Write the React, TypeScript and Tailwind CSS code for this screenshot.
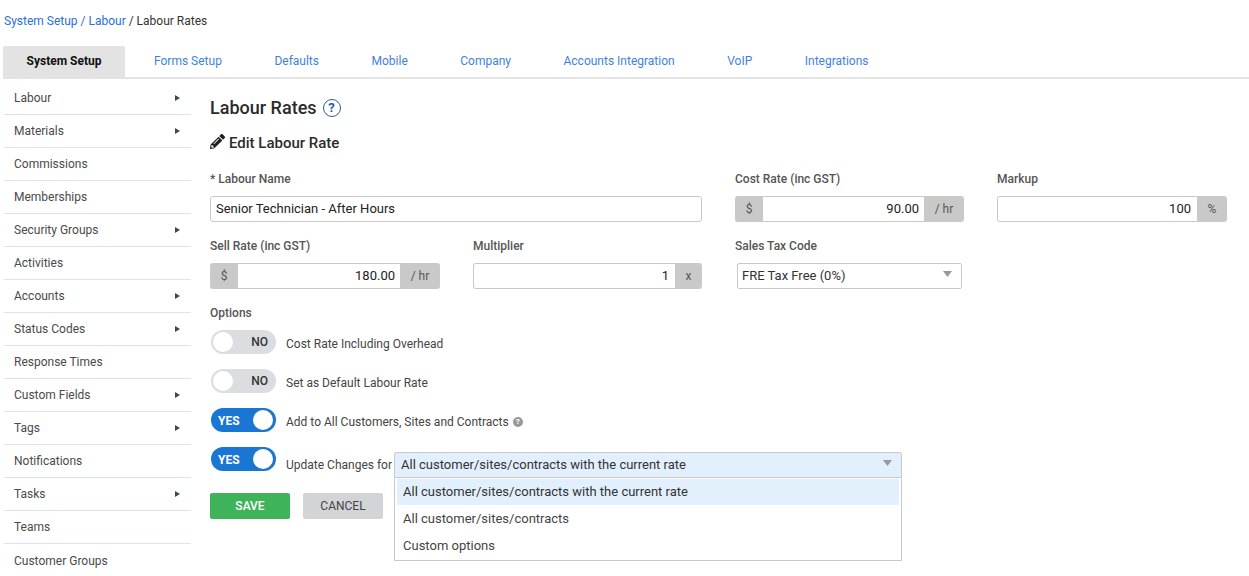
import React from 'react';
import { FaPencilAlt } from 'react-icons/fa';

const tabs = ['Forms Setup', 'Defaults', 'Mobile', 'Company', 'Accounts Integration', 'VoIP', 'Integrations'];

const menu: { label: string; sub?: boolean }[] = [
  { label: 'Labour', sub: true },
  { label: 'Materials', sub: true },
  { label: 'Commissions' },
  { label: 'Memberships' },
  { label: 'Security Groups', sub: true },
  { label: 'Activities' },
  { label: 'Accounts', sub: true },
  { label: 'Status Codes', sub: true },
  { label: 'Response Times' },
  { label: 'Custom Fields', sub: true },
  { label: 'Tags', sub: true },
  { label: 'Notifications' },
  { label: 'Tasks', sub: true },
  { label: 'Teams' },
  { label: 'Customer Groups' },
];

const Label: React.FC<{ children: React.ReactNode }> = ({ children }) => (
  <div className="h-[14px] leading-[16px] text-[12px] font-medium text-[#555] mb-[11px]">{children}</div>
);

const AddOn: React.FC<{ children: React.ReactNode; className?: string }> = ({ children, className }) => (
  <div className={`flex items-center justify-center bg-[#c9c9c9] text-[12px] text-[#555] ${className ?? ''}`}>{children}</div>
);

const RateInput: React.FC<{ value: string }> = ({ value }) => (
  <div className="flex h-[26px] rounded-[3px] overflow-hidden">
    <AddOn className="w-[28px] shrink-0">$</AddOn>
    <div className="flex-1 flex items-center justify-end pr-[5px] bg-white border-y border-[#c9c9c9] text-[13px] text-[#222]">{value}</div>
    <AddOn className="w-[40px] shrink-0">/ hr</AddOn>
  </div>
);

const SuffixInput: React.FC<{ value: string; suffix: string; wide?: boolean }> = ({ value, suffix, wide }) => (
  <div className="flex h-[26px] rounded-[3px] overflow-hidden border-y border-l border-[#c9c9c9]">
    <div className="flex-1 flex items-center justify-end pr-[6px] bg-white text-[13px] text-[#222]">{value}</div>
    <AddOn className={`shrink-0 -my-px ${wide ? 'w-[30px]' : 'w-[27px]'}`}>{suffix}</AddOn>
  </div>
);

const Caret = () => (
  <svg width="9" height="6" viewBox="0 0 9 6" className="shrink-0">
    <path d="M0 0h9L4.5 6z" fill="#999" />
  </svg>
);

const Toggle: React.FC<{ on?: boolean }> = ({ on }) =>
  on ? (
    <div className="relative w-[65px] h-[24px] shrink-0 rounded-full bg-[#1976d2]">
      <span className="absolute left-[7px] top-[6px] text-[12px] leading-[14px] font-bold text-white">YES</span>
      <span className="absolute right-[3px] top-[2px] w-[20px] h-[20px] rounded-full bg-white" />
    </div>
  ) : (
    <div className="relative w-[65px] h-[24px] shrink-0 rounded-full bg-[#dcdde0]">
      <span className="absolute left-[2px] top-[2px] w-[20px] h-[20px] rounded-full bg-white" />
      <span className="absolute right-[8px] top-[5px] text-[12px] leading-[14px] font-medium text-[#333]">NO</span>
    </div>
  );

export default function App() {
  return (
    <div className="h-[576px] overflow-hidden bg-white text-[12px] text-[#444] font-['Roboto',sans-serif]">
      <div className="h-[46px] pl-[4px] pt-[14px] leading-[14px]">
        <span className="text-[#2a6fdb]">System Setup / Labour</span>
        <span className="text-[#333]"> / Labour Rates</span>
      </div>

      <div className="flex h-[33px] ml-[3px] border-b-2 border-[#e3e3e3]">
        <div className="w-[122px] h-[31px] pb-[2px] rounded-t-[2px] bg-[#e3e3e3] flex items-center justify-center font-bold text-[#111]">
          System Setup
        </div>
        <div className="flex pl-[29px] gap-[52.5px]">
          {tabs.map((t) => (
            <div key={t} className="h-[31px] pb-[2px] flex items-center text-[#3f7fe0]">{t}</div>
          ))}
        </div>
      </div>

      <div className="flex">
        <ul className="w-[187px] ml-[4px] shrink-0 mt-[3px]">
          {menu.map((m, i) => (
            <li
              key={m.label}
              className={`h-[33px] pl-[10px] pr-[11px] flex items-center justify-between text-[#4a4a4a] ${i < menu.length - 1 ? 'border-b border-[#dde3ea]' : ''}`}
            >
              <span>{m.label}</span>
              {m.sub && (
                <svg width="5" height="6" viewBox="0 0 5 6">
                  <path d="M0 0l5 3-5 3z" fill="#3b4a57" />
                </svg>
              )}
            </li>
          ))}
        </ul>

        <div className="ml-[19px] w-[1017px]">
          <div className="flex items-center gap-[6px] h-[24px] mt-[17px]">
            <h1 className="text-[18px] leading-[24px] font-medium text-[#2b2b2b]">Labour Rates</h1>
            <span className="w-[18px] h-[18px] rounded-full border-[1.5px] border-[#2c5aa0] flex items-center justify-center text-[13px] font-bold text-[#2c5aa0]">?</span>
          </div>
          <div className="flex items-center gap-[4px] h-[20px] mt-[13px]">
            <FaPencilAlt className="text-[15px] text-[#222] -mt-[3px]" />
            <h2 className="text-[15px] leading-[20px] font-medium text-[#2b2b2b]">Edit Labour Rate</h2>
          </div>

          <div className="grid grid-cols-[230px_229px_229px_230px] gap-x-[33px] mt-[18px]">
            <div className="col-span-2">
              <Label>* Labour Name</Label>
              <div className="h-[26px] flex items-center pl-[5px] border border-[#c9c9c9] rounded-[3px] text-[13px] text-[#222]">
                Senior Technician - After Hours
              </div>
            </div>
            <div>
              <Label>Cost Rate (inc GST)</Label>
              <RateInput value="90.00" />
            </div>
            <div>
              <Label>Markup</Label>
              <SuffixInput value="100" suffix="%" wide />
            </div>
          </div>

          <div className="grid grid-cols-[230px_229px_229px_230px] gap-x-[33px] mt-[16px]">
            <div>
              <Label>Sell Rate (inc GST)</Label>
              <RateInput value="180.00" />
            </div>
            <div>
              <Label>Multiplier</Label>
              <SuffixInput value="1" suffix="x" />
            </div>
            <div>
              <Label>Sales Tax Code</Label>
              <div className="ml-[2px] w-[225px] h-[26px] pl-[4px] pr-[9px] flex items-center justify-between border border-[#c9c9c9] rounded-[2px] text-[13px] text-[#333]">
                <span>FRE Tax Free (0%)</span>
                <span className="-mt-[4px]"><Caret /></span>
              </div>
            </div>
          </div>

          <div className="mt-[16px] h-[14px] leading-[16px] font-medium text-[#555]">Options</div>

          <div className="mt-[11px] ml-px flex flex-col gap-[15px]">
            <div className="flex items-center gap-[10px] h-[24px]">
              <Toggle />
              <span className="pt-[4px]">Cost Rate Including Overhead</span>
            </div>
            <div className="flex items-center gap-[10px] h-[24px]">
              <Toggle />
              <span className="pt-[4px]">Set as Default Labour Rate</span>
            </div>
            <div className="flex items-center gap-[10px] h-[24px]">
              <Toggle on />
              <span className="pt-[4px] flex items-center gap-[4px]">
                Add to All Customers, Sites and Contracts
                <span className="w-[10px] h-[10px] rounded-full bg-[#999] flex items-center justify-center text-[8px] font-bold text-white">?</span>
              </span>
            </div>
            <div className="flex items-start gap-[10px] h-[24px]">
              <Toggle on />
              <span className="mt-[11px] leading-[14px]">Update Changes for</span>
              <div className="relative -ml-[8px] mt-[5px] w-[508px]">
                <div className="h-[26px] pl-[6px] pr-[9px] flex items-center justify-between bg-[#e2f0fd] border border-[#c9c9c9] rounded-t-[2px] text-[13px] text-[#333]">
                  <span>All customer/sites/contracts with the current rate</span>
                  <span className="-mt-[4px]"><Caret /></span>
                </div>
                <div className="absolute left-0 right-0 top-[26px] h-[83px] bg-white border-x border-b border-[#c9c9c9] px-[2px] pt-[1px] text-[13px] text-[#444]">
                  <div className="h-[26px] pl-[6px] flex items-center bg-[#e2f0fd] text-[#333]">All customer/sites/contracts with the current rate</div>
                  <div className="h-[27px] pl-[6px] flex items-center">All customer/sites/contracts</div>
                  <div className="h-[27px] pl-[6px] flex items-center">Custom options</div>
                </div>
              </div>
            </div>
          </div>

          <div className="flex gap-[13px] mt-[22px]">
            <button className="w-[80px] h-[26px] rounded-[2px] bg-[#3fb35a] text-white font-medium">SAVE</button>
            <button className="w-[80px] h-[26px] rounded-[2px] bg-[#d2d4d7] text-[#444]">CANCEL</button>
          </div>
        </div>
      </div>
    </div>
  );
}
